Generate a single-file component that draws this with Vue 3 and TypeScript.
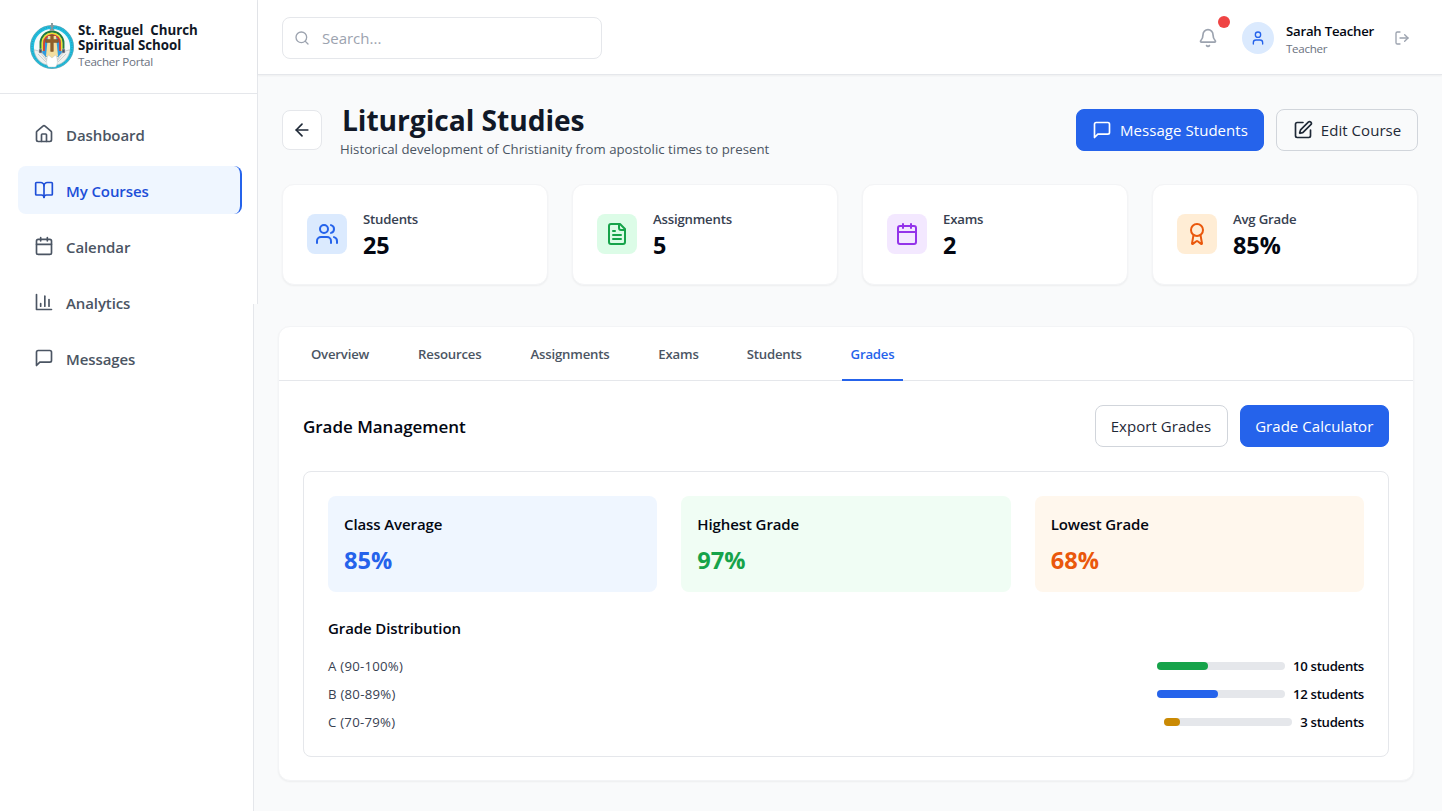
<script setup lang="ts">
interface Shape { paths: string[]; circles?: [number, number, number][] }

const icons: Record<string, Shape> = {
  home: { paths: ['M15 21v-8a1 1 0 0 0-1-1h-4a1 1 0 0 0-1 1v8', 'M3 10a2 2 0 0 1 .709-1.528l7-5.999a2 2 0 0 1 2.582 0l7 5.999A2 2 0 0 1 21 10v9a2 2 0 0 1-2 2H5a2 2 0 0 1-2-2z'] },
  book: { paths: ['M12 7v14', 'M3 18a1 1 0 0 1-1-1V4a1 1 0 0 1 1-1h5a4 4 0 0 1 4 4 4 4 0 0 1 4-4h5a1 1 0 0 1 1 1v13a1 1 0 0 1-1 1h-6a3 3 0 0 0-3 3 3 3 0 0 0-3-3z'] },
  calendar: { paths: ['M8 2v4', 'M16 2v4', 'M5 4h14a2 2 0 0 1 2 2v14a2 2 0 0 1-2 2H5a2 2 0 0 1-2-2V6a2 2 0 0 1 2-2z', 'M3 10h18'] },
  chart: { paths: ['M3 3v18h18', 'M18 17V9', 'M13 17V5', 'M8 17v-3'] },
  message: { paths: ['M21 15a2 2 0 0 1-2 2H7l-4 4V5a2 2 0 0 1 2-2h14a2 2 0 0 1 2 2z'] },
  search: { paths: ['m21 21-4.3-4.3'], circles: [[11, 11, 8]] },
  bell: { paths: ['M10.268 21a2 2 0 0 0 3.464 0', 'M3.262 15.326A1 1 0 0 0 4 17h16a1 1 0 0 0 .74-1.673C19.41 13.956 18 12.499 18 8A6 6 0 0 0 6 8c0 4.499-1.411 5.956-2.738 7.326'] },
  user: { paths: ['M19 21v-2a4 4 0 0 0-4-4H9a4 4 0 0 0-4 4v2'], circles: [[12, 7, 4]] },
  logout: { paths: ['M9 21H5a2 2 0 0 1-2-2V5a2 2 0 0 1 2-2h4', 'm16 17 5-5-5-5', 'M21 12H9'] },
  back: { paths: ['m12 19-7-7 7-7', 'M19 12H5'] },
  edit: { paths: ['M12 3H5a2 2 0 0 0-2 2v14a2 2 0 0 0 2 2h14a2 2 0 0 0 2-2v-7', 'M18.375 2.625a1 1 0 0 1 3 3l-9.013 9.014a2 2 0 0 1-.853.505l-2.873.84a.5.5 0 0 1-.62-.62l.84-2.873a2 2 0 0 1 .506-.852z'] },
  users: { paths: ['M16 21v-2a4 4 0 0 0-4-4H6a4 4 0 0 0-4 4v2', 'M22 21v-2a4 4 0 0 0-3-3.87', 'M16 3.13a4 4 0 0 1 0 7.75'], circles: [[9, 7, 4]] },
  file: { paths: ['M15 2H6a2 2 0 0 0-2 2v16a2 2 0 0 0 2 2h12a2 2 0 0 0 2-2V7z', 'M14 2v4a2 2 0 0 0 2 2h4', 'M10 9H8', 'M16 13H8', 'M16 17H8'] },
  award: { paths: ['m15.477 12.89 1.515 8.526a.5.5 0 0 1-.81.47l-3.58-2.687a1 1 0 0 0-1.197 0l-3.586 2.686a.5.5 0 0 1-.81-.469l1.514-8.526'], circles: [[12, 8, 6]] },
}

const Icon = (props: { name: string; size: number }) =>
  h('svg', {
    width: props.size, height: props.size, viewBox: '0 0 24 24', fill: 'none',
    stroke: 'currentColor', 'stroke-width': 2, 'stroke-linecap': 'round', 'stroke-linejoin': 'round',
  }, [
    ...icons[props.name].paths.map((d) => h('path', { d })),
    ...(icons[props.name].circles ?? []).map(([cx, cy, r]) => h('circle', { cx, cy, r })),
  ])
Icon.props = ['name', 'size']

const nav = [
  { label: 'Dashboard', icon: 'home' },
  { label: 'My Courses', icon: 'book', active: true },
  { label: 'Calendar', icon: 'calendar' },
  { label: 'Analytics', icon: 'chart' },
  { label: 'Messages', icon: 'message' },
]
const stats = [
  { label: 'Students', value: '25', icon: 'users', tone: 'blue' },
  { label: 'Assignments', value: '5', icon: 'file', tone: 'green' },
  { label: 'Exams', value: '2', icon: 'calendar', tone: 'purple' },
  { label: 'Avg Grade', value: '85%', icon: 'award', tone: 'orange' },
]
const tabs = [
  { label: 'Overview', width: 76 },
  { label: 'Resources', width: 79.5 },
  { label: 'Assignments', width: 97 },
  { label: 'Exams', width: 56 },
  { label: 'Students', width: 71.5 },
  { label: 'Grades', width: 61, active: true },
]
const grades = [
  { label: 'Class Average', value: '85%', tone: 'blue' },
  { label: 'Highest Grade', value: '97%', tone: 'green' },
  { label: 'Lowest Grade', value: '68%', tone: 'orange' },
]
const distribution = [
  { label: 'A (90-100%)', count: 10, percent: 40, color: '#16a34a' },
  { label: 'B (80-89%)', count: 12, percent: 48, color: '#2563eb' },
  { label: 'C (70-79%)', count: 3, percent: 12.5, color: '#ca8a04' },
]
</script>

<script lang="ts">
import { h } from 'vue'
</script>

<template>
  <div class="page">
    <aside class="sidebar">
      <div class="brand">
        <svg class="crest" width="44" height="46" viewBox="0 0 44 46">
          <circle cx="22" cy="24" r="19.9" fill="#f4fafa" stroke="#1fbfe0" stroke-width="3.6" />
          <circle cx="22" cy="24" r="20" fill="none" stroke="#2b8fa8" stroke-width="1" stroke-dasharray="1 1.5" />
          <circle cx="22" cy="24" r="21.6" fill="none" stroke="#5b8f9b" stroke-width=".5" />
          <path d="M11 33V20a11 11 0 0 1 22 0v13z" fill="#2f9be0" />
          <path d="M10.5 28v-8a11.5 11.5 0 0 1 23 0v8" fill="none" stroke="#1f7a3d" stroke-width="1.9" />
          <path d="M12.3 28v-8a9.7 9.7 0 0 1 19.4 0v8" fill="none" stroke="#f0dc2e" stroke-width="1.7" />
          <path d="M14 28v-8a8 8 0 0 1 16 0v8" fill="none" stroke="#dd3a2c" stroke-width="1.7" />
          <path d="M14.9 26h2.6v8h-2.6zm11.6 0h2.6v8h-2.6z" fill="#2f9be0" />
          <path d="M18 13h8l2 20-6 5-6-5z" fill="#f3dfa0" />
          <path d="M20.7 12h2.6v4.6h5v2.8h-5v9h-2.6v-9h-5v-2.8h5z" fill="#93602a" stroke="#6d4820" stroke-width=".5" />
          <path d="M4 27c4 0 10 3 12 8l3 7C11 42 5 35 4 27zM40 27c-4 0-10 3-12 8l-3 7c8 0 14-7 15-15z" fill="#f0f1ef" stroke="#a6b1b0" stroke-width=".6" />
          <path d="m8 31 8 8m-6-10 7 9m19-7-8 8m6-10-7 9" fill="none" stroke="#c3c9c7" stroke-width=".8" />
          <path d="M18.5 32c-2 3-3 9 0 12h7c3-3 2-9 0-12L22 35z" fill="#fff" stroke="#bec7c7" stroke-width=".5" />
          <path d="M9 26h3v4H9zm23 0h3v4h-3z" fill="#45536a" stroke="#d5d5d0" stroke-width=".5" />
          <path d="M22 0v8m-1.8-5h3.6m-4 4h4.4" fill="none" stroke="#87999c" stroke-width="1.9" />
        </svg>
        <div class="brand-text">
          <strong>St. Raguel&nbsp; Church<br />Spiritual School</strong>
          <span>Teacher Portal</span>
        </div>
      </div>
      <nav class="nav">
        <a v-for="item in nav" :key="item.label" class="nav-item" :class="{ active: item.active }">
          <Icon :name="item.icon" :size="20" /><span class="medium">{{ item.label }}</span>
        </a>
      </nav>
    </aside>

    <div class="main">
      <header class="topbar">
        <div class="search"><Icon name="search" :size="16" /><span>Search...</span></div>
        <div class="account">
          <div class="bell"><Icon name="bell" :size="20" /><i class="dot"></i></div>
          <div class="avatar"><Icon name="user" :size="16" /></div>
          <div class="who"><strong>Sarah Teacher</strong><span>Teacher</span></div>
          <Icon class="logout" name="logout" :size="16" />
        </div>
      </header>

      <main class="content">
        <section class="heading">
          <button class="back"><Icon name="back" :size="20" /></button>
          <div class="title">
            <h1>Liturgical Studies</h1>
            <p>Historical development of Christianity from apostolic times to present</p>
          </div>
          <button class="btn primary message"><Icon name="message" :size="20" /><span>Message Students</span></button>
          <button class="btn edit"><Icon name="edit" :size="20" /><span>Edit Course</span></button>
        </section>

        <section class="stats">
          <article v-for="s in stats" :key="s.label" class="stat">
            <div class="stat-icon" :class="s.tone"><Icon :name="s.icon" :size="24" /></div>
            <div class="stat-text"><span class="medium">{{ s.label }}</span><strong>{{ s.value }}</strong></div>
          </article>
        </section>

        <section class="panel">
          <div class="tabs">
            <a v-for="t in tabs" :key="t.label" class="tab medium" :class="{ active: t.active }" :style="{ width: t.width + 'px' }">{{ t.label }}</a>
          </div>
          <div class="panel-body">
            <div class="panel-head">
              <h2>Grade Management</h2>
              <button class="btn export"><span>Export Grades</span></button>
              <button class="btn primary calc"><span>Grade Calculator</span></button>
            </div>
            <div class="summary">
              <div class="grade-grid">
                <div v-for="g in grades" :key="g.label" class="grade" :class="g.tone">
                  <h4 class="medium">{{ g.label }}</h4><strong>{{ g.value }}</strong>
                </div>
              </div>
              <h3 class="medium">Grade Distribution</h3>
              <div class="rows">
                <div v-for="d in distribution" :key="d.label" class="row">
                  <span>{{ d.label }}</span>
                  <div class="track"><div class="fill" :style="{ width: d.percent + '%', background: d.color }"></div></div>
                  <strong class="medium">{{ d.count }} students</strong>
                </div>
              </div>
            </div>
          </div>
        </section>
      </main>
    </div>
  </div>
</template>

<style>
body { margin: 0; overflow: hidden; }
</style>

<style scoped>
* { box-sizing: border-box; }
.page { display: flex; width: 1442px; height: 811px; background: #f9fafb; font-family: "Open Sans", "Noto Sans", sans-serif; color: #030712; white-space: nowrap; }
h1, h2, h3, h4, p { margin: 0; }
svg { flex: none; display: block; }
button { font: inherit; padding: 0; }
.medium { font-weight: 600; }

.sidebar { width: 258px; flex: none; background: linear-gradient(#fff, #fff) 0 0 / 257px 304px no-repeat, linear-gradient(#e5e7eb, #e5e7eb) 0 0 / 258px 304px no-repeat, linear-gradient(#fff, #fff) 0 304px / 253px 507px no-repeat, linear-gradient(#e5e7eb, #e5e7eb) 0 304px / 254px 507px no-repeat; }
.brand { display: flex; height: 94px; width: 257px; padding: 23px 0 0 30px; border-bottom: 1px solid #e5e7eb; }
.brand-text { display: flex; flex-direction: column; margin-left: 4px; }
.brand-text strong { font-size: 13.3px; line-height: 15px; font-weight: 700; color: #111827; }
.brand-text span { font-size: 11.6px; line-height: 16px; margin-top: 1px; letter-spacing: -0.25px; color: #6b7280; }
.nav { display: flex; flex-direction: column; gap: 8px; padding: 16px 16.5px 0 18px; }
.nav-item { display: flex; align-items: center; gap: 12px; height: 48px; padding: 0 0 1px 16px; border-radius: 8px; font-size: 15px; letter-spacing: -0.1px; color: #4b5563; }
.nav-item svg { margin-top: 1px; }
.nav-item span { margin-top: 2px; }
.nav-item.active { background: #eff6ff; color: #1d4ed8; border-right: 2px solid #2563eb; }

.main { flex: 1; min-width: 0; }
.topbar { height: 75px; background: #fff; border-bottom: 1px solid #e5e7eb; box-shadow: 0 1px 2px rgba(0,0,0,.05); display: flex; justify-content: space-between; padding: 0 32px 0 24px; }
.search { display: flex; align-items: center; gap: 12px; width: 320px; height: 42px; margin-top: 17px; padding-left: 11px; border: 1px solid #e5e7eb; border-radius: 8px; color: #9ca3af; font-size: 15px; }
.account { display: flex; align-items: center; padding-top: 2px; }
.bell { position: relative; color: #9ca3af; margin-right: 24px; }
.dot { position: absolute; right: -12px; top: -12px; width: 12px; height: 12px; border-radius: 50%; background: #ef4444; }
.avatar { display: grid; place-items: center; width: 32px; height: 32px; border-radius: 50%; background: #dbeafe; color: #2563eb; }
.who { display: flex; flex-direction: column; width: 108px; margin: 3px 0 0 12px; }
.who strong { font-size: 13.2px; line-height: 19px; font-weight: 600; letter-spacing: -0.23px; }
.who span { font-size: 11.6px; line-height: 16px; letter-spacing: -0.3px; color: #6b7280; }
.logout { color: #9ca3af; }

.content { padding: 34px 24px 0; }
.heading { display: flex; height: 74.5px; }
.back { display: grid; place-items: center; width: 40px; height: 40px; margin-top: 1px; border: 1px solid #e5e7eb; border-radius: 8px; background: #fff; color: #1f2937; }
.title { flex: 1; margin: -8px 0 0 18px; }
.title h1 { font-size: 28.2px; line-height: 38px; font-weight: 700; margin-left: 2px; letter-spacing: -0.05px; color: #111827; }
.title p { font-size: 13.2px; line-height: 20px; letter-spacing: 0.03px; color: #4b5563; }
.btn { display: flex; align-items: center; justify-content: center; gap: 8px; height: 42px; border: 1px solid #d1d5db; border-radius: 8px; background: transparent; color: #1f2937; font-size: 15px; letter-spacing: 0.05px; }
.btn span { margin-top: -1px; }
.btn.primary { background: #2563eb; border-color: #2563eb; color: #fff; }
.message { width: 188px; margin-right: 12px; }
.edit { width: 142px; }

.stats { display: grid; grid-template-columns: repeat(4, 1fr); gap: 24px; }
.stat { display: flex; align-items: center; height: 101.5px; padding-left: 24px; border: 1px solid #f3f4f6; border-radius: 12px; background: #fff; box-shadow: 0 1px 2px rgba(0,0,0,.05); }
.stat-icon { display: grid; place-items: center; width: 40px; height: 40px; border-radius: 8px; }
.stat-icon.blue { background: #dbeafe; color: #2563eb; }
.stat-icon.green { background: #dcfce7; color: #16a34a; }
.stat-icon.purple { background: #f3e8ff; color: #9333ea; }
.stat-icon.orange { background: #ffedd5; color: #ea580c; }
.stat-text { display: flex; flex-direction: column; margin: 2px 0 0 16px; }
.stat-text span { font-size: 13.2px; line-height: 20px; letter-spacing: -0.2px; color: #374151; }
.stat-text strong { font-size: 23.4px; line-height: 32px; font-weight: 700; }

.panel { width: 1136px; height: 455px; margin: 41px 0 0 -4px; border: 1px solid #f3f4f6; border-radius: 12px; background: #fff; box-shadow: 0 1px 2px rgba(0,0,0,.05); }
.tabs { display: flex; gap: 32px; height: 54px; padding-left: 22.5px; border-bottom: 1px solid #e5e7eb; }
.tab { display: flex; justify-content: center; height: 54px; line-height: 54px; text-indent: 1px; font-size: 13.2px; letter-spacing: -0.2px; color: #4b5563; }
.tab.active { color: #2563eb; border-bottom: 2px solid #2563eb; }
.panel-body { padding: 24px 24px 0; }
.panel-head { display: flex; align-items: center; height: 42px; }
.panel-head h2 { flex: 1; font-size: 17px; font-weight: 600; line-height: 28px; margin-top: 1px; letter-spacing: -0.03px; }
.export { width: 133px; margin-right: 12px; }
.calc { width: 149.5px; }
.summary { height: 286px; margin-top: 24px; padding: 24px; border: 1px solid #e5e7eb; border-radius: 8px; }
.grade-grid { display: grid; grid-template-columns: repeat(3, 1fr); gap: 24px; }
.grade { height: 96px; padding: 16px; border-radius: 8px; }
.grade h4 { font-size: 15px; line-height: 24px; letter-spacing: -0.1px; }
.grade strong { display: block; margin-top: 8px; font-size: 23.6px; line-height: 32px; font-weight: 700; }
.grade.blue { background: #eff6ff; } .grade.blue strong { color: #2563eb; }
.grade.green { background: #f0fdf4; } .grade.green strong { color: #16a34a; }
.grade.orange { background: #fff7ed; } .grade.orange strong { color: #ea580c; }
.summary h3 { margin: 24px 0 16px; font-size: 15px; line-height: 24px; letter-spacing: -0.1px; }
.rows { display: flex; flex-direction: column; gap: 8px; }
.row { display: flex; align-items: center; height: 20px; font-size: 13.2px; line-height: 20px; }
.row > span { flex: 1; color: #374151; letter-spacing: 0.25px; }
.row strong { margin-left: 8px; letter-spacing: -0.3px; }
.track { width: 128px; height: 8px; border-radius: 4px; background: #e5e7eb; }
.fill { height: 8px; border-radius: 4px; }
</style>
